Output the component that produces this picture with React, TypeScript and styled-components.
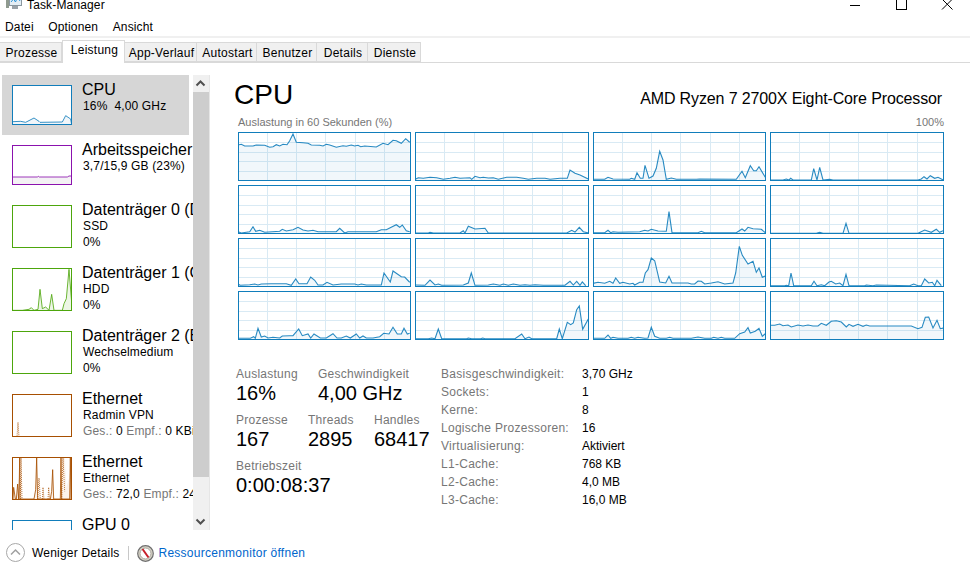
import React from 'react'
import styled, { createGlobalStyle } from 'styled-components'

const CPU_BLUE = '#117dbb'

const GlobalStyle = createGlobalStyle`
  html, body {
    margin: 0;
    padding: 0;
    background: #fff;
    overflow: hidden;
  }
  body {
    font-family: "Liberation Sans", Arial, sans-serif;
    color: #000;
  }
`

const Page = styled.div`
  width: 970px;
  height: 575px;
  display: flex;
  flex-direction: column;
  overflow: hidden;
`

const TitleBar = styled.div`
  height: 18px;
  box-sizing: border-box;
  padding: 0 16px 8px 6px;
  display: flex;
  align-items: flex-end;
  overflow: hidden;
  font-size: 12px;
`

const TitleText = styled.span`
  margin-left: 5px;
  line-height: 14px;
  margin-bottom: -2px;
  letter-spacing: 0.15px;
  flex: 1;
`

const MenuBar = styled.div`
  height: 18px;
  display: flex;
  align-items: center;
  padding-left: 5px;
  gap: 14.5px;
  font-size: 12px;
  letter-spacing: 0.15px;
  border-bottom: 2px solid #f0f0f0;
`

const TabStrip = styled.div`
  height: 23px;
  box-sizing: border-box;
  margin-top: 2px;
  display: flex;
  align-items: flex-end;
  border-bottom: 1px solid #d9d9d9;
`

const Tab = styled.div<{ $width: number; $active?: boolean }>`
  width: ${p => p.$width}px;
  box-sizing: border-box;
  height: ${p => (p.$active ? 23 : 20)}px;
  margin-bottom: ${p => (p.$active ? -1 : 0)}px;
  padding: ${p => (p.$active ? 2 : 3)}px 0 0 2px;
  text-align: center;
  font-size: 12px;
  line-height: 14px;
  letter-spacing: 0.25px;
  background: ${p => (p.$active ? '#fff' : '#f0f0f0')};
  border: 1px solid #d9d9d9;
  border-bottom: ${p => (p.$active ? 'none' : '1px solid #d9d9d9')};
  border-left: ${p => (p.$active ? '1px solid #d9d9d9' : 'none')};
`

const Body = styled.div`
  height: 472px;
  display: flex;
`

const List = styled.div`
  width: 191px;
  height: 455px;
  margin: 12px 0 0 2px;
  overflow: hidden;
  flex: none;
`

const Item = styled.div<{ $selected?: boolean }>`
  width: 187px;
  box-sizing: border-box;
  padding: 5px 10px 10px;
  display: flex;
  align-items: flex-start;
  gap: 10px;
  background: ${p => (p.$selected ? '#d6d6d6' : 'transparent')};
`

const ItemText = styled.div`
  height: 40px;
  padding-left: 1px;
  white-space: nowrap;
  font-size: 12px;
  line-height: 16px;
  letter-spacing: 0.15px;
`

const ItemTitle = styled.div`
  margin: 1px 0 -1px -1px;
  font-size: 16px;
  line-height: 18px;
  letter-spacing: 0;
`

const Muted = styled.span`
  color: #767676;
`

const Thumb = styled.svg<{ $color: string }>`
  display: block;
  flex: none;
  width: 60px;
  margin-top: 5px;
  box-sizing: border-box;
  background: #fff;
  border: 1px solid ${p => p.$color};
`

const ScrollBar = styled.div`
  width: 16px;
  height: 455px;
  margin-top: 12px;
  flex: none;
  display: flex;
  flex-direction: column;
  background: #f0f0f0;
  border-right: 1px solid #e6e6e6;
`

const ScrollArrow = styled.svg`
  display: block;
  width: 15px;
  height: 17px;
  flex: none;
`

const ScrollThumb = styled.div`
  height: 385px;
  background: #cdcdcd;
  margin-bottom: auto;
`

const Main = styled.div`
  flex: 1;
  padding: 15px 26px 0 24px;
`

const Header = styled.div`
  display: flex;
  justify-content: space-between;
  align-items: baseline;
  height: 37px;
`

const Heading = styled.div`
  font-size: 28px;
  line-height: 34px;
`

const ProcessorName = styled.div`
  font-size: 16px;
  letter-spacing: -0.13px;
  margin-right: 2px;
`

const Caption = styled.div`
  display: flex;
  justify-content: space-between;
  margin-left: 4px;
  font-size: 11px;
  line-height: 14px;
  height: 17px;
  color: #767676;
`

const GraphGrid = styled.div`
  display: grid;
  grid-template-columns: 173px 174px 173px 174px;
  grid-auto-rows: 49px;
  gap: 4px;
  margin-left: 4px;
`

const GraphFrame = styled.svg`
  display: block;
  width: 100%;
  height: 100%;
  box-sizing: border-box;
  border: 1px solid ${CPU_BLUE};
`

const Stats = styled.div`
  display: flex;
  margin: 26px 0 0 2px;
`

const StatColumn = styled.div`
  width: 205px;
  display: flex;
  flex-direction: column;
  gap: 6px;
`

const StatRow = styled.div`
  display: flex;
`

const Stat = styled.div<{ $width?: number }>`
  width: ${p => (p.$width ? `${p.$width}px` : 'auto')};
`

const StatLabel = styled.div`
  font-size: 12px;
  line-height: 16px;
  letter-spacing: 0.25px;
  color: #767676;
`

const StatValue = styled.div`
  margin: -1px 0 1px;
  font-size: 20px;
  line-height: 24px;
  white-space: nowrap;
`

const SpecTable = styled.div`
  display: grid;
  grid-template-columns: 141px auto;
  grid-auto-rows: 18px;
  margin-top: -1px;
  font-size: 12px;
  line-height: 18px;
`

const SpecLabel = styled.div`
  color: #767676;
  letter-spacing: 0.28px;
`

const Footer = styled.div`
  height: 36px;
  display: flex;
  align-items: center;
  padding-left: 6px;
  font-size: 12px;
  letter-spacing: 0.2px;
`

const DetailsButton = styled.svg`
  flex: none;
  width: 20px;
  height: 20px;
  margin-right: 6px;
`

const FooterDivider = styled.div`
  width: 1px;
  height: 14px;
  background: #c8c8c8;
  margin: 0 8px 0 9px;
`

const MonitorIcon = styled.svg`
  flex: none;
  width: 17px;
  height: 17px;
  margin-right: 4px;
`

const FooterLink = styled.span`
  color: #0066cc;
  letter-spacing: 0.26px;
`

// graph traces were read off the reference at 3x zoom, ox/oy is the frame corner in that crop
type Trace = { ox: number; oy: number; pts: string }

const traces: Trace[] = [
  { ox: 25, oy: 66, pts: '25,105 35,103 45,108 70,108 80,105 105,106 120,112 130,110 140,104 150,108 160,103 172,104 180,92 190,72 200,97 220,98 235,100 245,105 270,106 280,108 290,103 300,105 320,112 340,107 350,109 365,105 375,108 385,106 393,110 405,108 440,111 460,100 475,104 490,91 500,92 515,100 528,86 540,97' },
  { ox: 555, oy: 66, pts: '555,208 565,203 580,205 600,202 620,203 640,208 660,205 675,202 690,205 720,203 725,208 735,199 750,203 760,202 775,204 790,203 805,208 830,202 860,202 880,205 895,208 920,205 945,205 960,208 990,205 1012,205 1020,180 1035,190 1050,195 1075,207' },
  { ox: 10, oy: 66, pts: '10,208 45,208 55,202 70,207 120,208 125,205 135,208 142,188 152,205 160,205 166,166 178,205 190,198 200,175 210,124 220,150 230,208 245,204 260,208 320,208 330,207 440,208 457,184 467,203 482,167 492,182 500,182 508,170 527,202' },
  { ox: 541, oy: 66, pts: '541,210 580,210 590,207 598,210 603,205 610,210 665,210 672,176 682,210 690,172 700,210 720,208 730,210 985,210 995,207 1003,200 1012,207 1022,197 1035,205 1045,202 1061,210' },
  { ox: 25, oy: 225, pts: '25,365 35,369 60,365 70,350 78,364 90,361 105,367 150,364 158,358 170,363 190,359 205,352 220,360 235,363 250,361 265,365 320,365 330,355 345,369 355,365 440,365 455,359 470,359 500,344 510,352 518,345 530,362 540,365' },
  { ox: 555, oy: 225, pts: '555,369 595,369 600,367 610,369 690,369 700,362 705,369 715,349 735,357 765,355 775,369 1010,369 1025,361 1035,366 1048,352 1060,365 1075,369' },
  { ox: 10, oy: 225, pts: '10,368 45,368 55,361 63,368 70,365 85,367 150,365 165,361 175,363 185,358 205,363 230,364 238,305 247,368 325,368 335,364 345,368 440,368 457,357 465,363 475,352 490,356 515,358 527,368' },
  { ox: 541, oy: 225, pts: '541,370 680,370 690,367 700,370 760,370 769,340 778,370 985,370 1005,360 1025,367 1040,358 1050,367 1060,362' },
  { ox: 25, oy: 10, pts: '25,148 32,152 60,150 75,148 85,151 95,148 125,147 170,147 185,152 198,133 208,147 232,147 243,127 255,137 265,151 280,151 292,143 310,151 335,148 375,148 385,151 395,148 410,151 455,151 463,115 482,142 490,109 515,126 525,127 540,143' },
  { ox: 555, oy: 10, pts: '555,151 585,152 600,136 615,151 625,148 635,152 700,151 715,145 724,115 735,152 775,151 790,148 810,152 820,148 835,152 850,148 870,152 885,150 900,152 915,150 940,152 990,152 1005,152 1020,140 1030,151 1040,140 1050,152 1057,142 1067,153' },
  { ox: 10, oy: 10, pts: '10,146 25,143 45,146 60,140 70,146 78,130 90,146 100,143 120,148 130,146 135,151 150,143 160,143 167,115 175,105 185,70 195,78 210,142 228,145 238,125 247,145 295,145 305,148 315,148 325,139 335,140 345,148 365,145 385,141 405,148 430,145 438,115 449,35 458,62 475,88 490,80 500,113 508,100 518,128 527,124' },
  { ox: 541, oy: 10, pts: '541,153 585,153 590,152 597,153 604,115 612,153 665,153 673,140 682,153 695,150 705,153 718,142 725,140 738,148 750,145 760,153 769,119 778,153 825,153 830,151 850,153 860,151 960,153 972,148 985,153 995,153 1005,133 1017,145 1028,143 1035,153 1042,137 1055,153' },
  { ox: 25, oy: 169, pts: '25,311 62,311 72,306 77,311 85,281 95,307 105,304 115,310 130,308 150,310 158,304 180,303 190,303 207,283 218,303 235,298 243,310 253,298 272,310 290,310 310,297 322,310 335,310 350,304 362,310 380,298 390,310 400,304 410,310 430,310 450,306 462,296 478,298 490,278 503,298 515,298 523,281 533,298 540,296' },
  { ox: 555, oy: 169, pts: '555,312 595,312 605,310 615,312 625,283 635,312 710,312 715,310 725,312 752,312 758,310 765,312 855,312 875,298 885,312 897,307 905,312 980,312 988,283 997,312 1012,263 1022,270 1030,265 1040,225 1048,214 1058,284 1075,253' },
  { ox: 10, oy: 169, pts: '10,311 45,311 55,301 63,311 70,308 85,311 115,311 125,308 135,311 145,308 165,311 175,310 185,278 195,305 210,311 230,311 240,308 250,311 305,311 325,307 345,311 365,311 372,308 385,311 395,308 405,311 435,311 450,297 465,292 475,279 482,295 497,290 508,281 518,305 527,297' },
  { ox: 541, oy: 169, pts: '541,272 555,272 570,268 580,273 595,271 605,277 625,271 640,274 655,271 670,274 685,274 695,266 710,272 725,260 740,258 755,262 770,277 778,269 790,275 805,269 820,275 830,271 840,274 965,274 985,282 997,278 1007,248 1017,247 1030,280 1042,257 1052,282 1061,280' },
]

const toPixels = ({ ox, oy, pts }: Trace) =>
  pts
    .split(' ')
    .map(p => {
      const [x, y] = p.split(',').map(Number)
      return `${((x - ox) / 3 - 1).toFixed(1)},${((y - oy) / 3 - 1).toFixed(1)}`
    })
    .join(' ')

const COLUMNS = {
  narrow: [28.5, 57.5, 86.5, 116.5, 145.5],
  wide: [28.5, 58.5, 87.5, 116.5, 146.5],
}
const ROWS = [9.5, 19.5, 28.5, 38.5]

const CoreGraph = ({ trace, wide }: { trace: Trace; wide: boolean }) => {
  const w = wide ? 172 : 171
  const line = toPixels(trace)
  return (
    <GraphFrame viewBox={`0 0 ${w} 47`}>
      {(wide ? COLUMNS.wide : COLUMNS.narrow).map(x => (
        <line key={x} x1={x} x2={x} y1="0" y2="47" stroke="#d9eaf4" />
      ))}
      {ROWS.map(y => (
        <line key={y} x1="0" x2={w} y1={y} y2={y} stroke="#d9eaf4" />
      ))}
      <polygon points={`0,47 ${line} ${w},47`} fill={CPU_BLUE} fillOpacity="0.06" />
      <polyline points={line} fill="none" stroke={CPU_BLUE} strokeWidth="1.1" strokeOpacity="0.9" />
    </GraphFrame>
  )
}

const SideGraph = ({
  color,
  fill,
  height,
  pts,
  dotted,
  wash,
}: {
  color: string
  fill: string
  height: number
  pts?: string
  dotted?: string[]
  wash?: string
}) => (
  <Thumb $color={color} viewBox={`0 0 174 ${height * 3 - 6}`} style={{ height }}>
    {wash && <polygon points={wash} fill={fill} />}
    {pts && <polygon points={`0,${height * 3} ${pts} 174,${height * 3}`} fill={fill} />}
    {dotted?.map(d => (
      <polyline key={d} points={d} fill={fill} stroke={color} strokeWidth="3" strokeDasharray="3 3" strokeOpacity="0.75" />
    ))}
    {pts && <polyline points={pts} fill="none" stroke={color} strokeWidth="2.5" />}
  </Thumb>
)

const tabs: [string, number, boolean?][] = [
  ['Prozesse', 62],
  ['Leistung', 63, true],
  ['App-Verlauf', 72],
  ['Autostart', 60],
  ['Benutzer', 60],
  ['Details', 51],
  ['Dienste', 53],
]

const specs = [
  ['Basisgeschwindigkeit:', '3,70 GHz'],
  ['Sockets:', '1'],
  ['Kerne:', '8'],
  ['Logische Prozessoren:', '16'],
  ['Virtualisierung:', 'Aktiviert'],
  ['L1-Cache:', '768 KB'],
  ['L2-Cache:', '4,0 MB'],
  ['L3-Cache:', '16,0 MB'],
]

const App = () => (
  <Page>
    <GlobalStyle />
    <TitleBar>
      <svg width="16" height="16" viewBox="0 0 16 16">
        <rect x="3.500" y="1.500" width="12" height="10" fill="#e4eef5" stroke="#8a97a0" />
        <polyline points="5,8 7.500,5 9.500,8 11.500,3 14,7" fill="none" stroke="#2f95d8" />
        <rect x="0" y="5" width="3" height="9" fill="#8f9a8f" />
        <rect x="6" y="12" width="6" height="3" fill="#9aa2a8" />
      </svg>
      <TitleText>Task-Manager</TitleText>
      <svg width="110" height="12" viewBox="0 0 110 12">
        <line x1="6" x2="16" y1="7.500" y2="7.500" stroke="#000" />
        <rect x="52.500" y="1.500" width="10" height="10" fill="none" stroke="#000" />
        <path d="M98 1l10.500 10.500M108.500 1L98 11.500" stroke="#000" fill="none" />
      </svg>
    </TitleBar>
    <MenuBar>
      <span>Datei</span>
      <span>Optionen</span>
      <span>Ansicht</span>
    </MenuBar>
    <TabStrip>
      {tabs.map(([label, width, active]) => (
        <Tab key={label} $width={width} $active={active}>
          {label}
        </Tab>
      ))}
    </TabStrip>
    <Body>
      <List>
        <Item $selected>
          <SideGraph color={CPU_BLUE} fill="#f1f6fa" height={40} pts="0,107 23,106 38,109 63,96 78,106 81,109 148,108 158,89 173,99 176,116" />
          <ItemText>
            <ItemTitle>CPU</ItemTitle>
            16%&nbsp; 4,00 GHz
          </ItemText>
        </Item>
        <Item>
          <SideGraph color="#8b12ae" fill="#f4f2f4" height={40} pts="0,93 73,93 76,91 79,93 163,93 168,90 178,90" />
          <ItemText>
            <ItemTitle>Arbeitsspeicher</ItemTitle>
            3,7/15,9 GB (23%)
          </ItemText>
        </Item>
        <Item>
          <SideGraph color="#4da60c" fill="#edf6e6" height={43} />
          <ItemText>
            <ItemTitle>Datenträger 0 (D:)</ItemTitle>
            <div>SSD</div>
            <div>0%</div>
          </ItemText>
        </Item>
        <Item>
          <SideGraph color="#4da60c" fill="#edf6e6" height={43} pts="0,124 28,124 48,121 55,116 63,124 75,121 81,61 88,119 98,114 108,124 116,76 123,124 148,124 153,104 160,89 168,1 176,100" />
          <ItemText>
            <ItemTitle>Datenträger 1 (C:)</ItemTitle>
            <div>HDD</div>
            <div>0%</div>
          </ItemText>
        </Item>
        <Item>
          <SideGraph color="#4da60c" fill="#edf6e6" height={43} />
          <ItemText>
            <ItemTitle>Datenträger 2 (E:)</ItemTitle>
            <div>Wechselmedium</div>
            <div>0%</div>
          </ItemText>
        </Item>
        <Item>
          <SideGraph color="#a74f01" fill="#fcf3eb" height={43} dotted={['12,124 15,82 18,124']} />
          <ItemText>
            <ItemTitle>Ethernet</ItemTitle>
            <div>Radmin VPN</div>
            <div>
              <Muted>Ges.:</Muted> 0 <Muted>Empf.:</Muted> 0 KBit/s
            </div>
          </ItemText>
        </Item>
        <Item>
          <SideGraph
            color="#a74f01"
            fill="#fcf3eb"
            height={43}
            wash="144,123 148,0 156,0 160,90 168,60 172,0 174,0 174,123"
            pts="0,123 2,88 7,123 10,123 14,78 17,123 19,60 20,0 21,123 63,123 68,95 71,0 74,123 112,123 116,100 119,35 122,123 142,123 144,0 146,123 170,123 172,0 174,123"
            dotted={['22,123 24,0 27,123', '74,123 78,60 82,123', '88,123 90,88 93,123', '105,123 107,88 110,123', '146,123 150,0 155,100']}
          />
          <ItemText>
            <ItemTitle>Ethernet</ItemTitle>
            <div>Ethernet</div>
            <div>
              <Muted>Ges.:</Muted> 72,0 <Muted>Empf.:</Muted> 24,0 KBit/s
            </div>
          </ItemText>
        </Item>
        <Item>
          <SideGraph color={CPU_BLUE} fill="#f1f6fa" height={43} />
          <ItemText>
            <ItemTitle>GPU 0</ItemTitle>
          </ItemText>
        </Item>
      </List>
      <ScrollBar>
        <ScrollArrow viewBox="0 0 15 17">
          <path d="M3.500 10.500l4-4 4 4" fill="none" stroke="#505050" strokeWidth="2" />
        </ScrollArrow>
        <ScrollThumb />
        <ScrollArrow viewBox="0 0 15 17">
          <path d="M3.500 6.500l4 4 4-4" fill="none" stroke="#505050" strokeWidth="2" />
        </ScrollArrow>
      </ScrollBar>
      <Main>
        <Header>
          <Heading>CPU</Heading>
          <ProcessorName>AMD Ryzen 7 2700X Eight-Core Processor</ProcessorName>
        </Header>
        <Caption>
          <span>Auslastung in 60 Sekunden (%)</span>
          <span>100%</span>
        </Caption>
        <GraphGrid>
          {traces.map((t, i) => (
            <CoreGraph key={i} trace={t} wide={i % 2 === 1} />
          ))}
        </GraphGrid>
        <Stats>
          <StatColumn>
            <StatRow>
              <Stat $width={82}>
                <StatLabel>Auslastung</StatLabel>
                <StatValue>16%</StatValue>
              </Stat>
              <Stat>
                <StatLabel>Geschwindigkeit</StatLabel>
                <StatValue>4,00 GHz</StatValue>
              </Stat>
            </StatRow>
            <StatRow>
              <Stat $width={72}>
                <StatLabel>Prozesse</StatLabel>
                <StatValue>167</StatValue>
              </Stat>
              <Stat $width={66}>
                <StatLabel>Threads</StatLabel>
                <StatValue>2895</StatValue>
              </Stat>
              <Stat>
                <StatLabel>Handles</StatLabel>
                <StatValue>68417</StatValue>
              </Stat>
            </StatRow>
            <Stat>
              <StatLabel>Betriebszeit</StatLabel>
              <StatValue>0:00:08:37</StatValue>
            </Stat>
          </StatColumn>
          <SpecTable>
            {specs.map(([label, value]) => (
              <React.Fragment key={label}>
                <SpecLabel>{label}</SpecLabel>
                <div>{value}</div>
              </React.Fragment>
            ))}
          </SpecTable>
        </Stats>
      </Main>
    </Body>
    <Footer>
      <DetailsButton viewBox="0 0 20 20">
        <circle cx="9.500" cy="9.500" r="9" fill="#fff" stroke="#a8a8a8" />
        <path d="M5 11.500l4.500-4.500 4.500 4.500" fill="none" stroke="#a0a0a0" strokeWidth="1.500" />
      </DetailsButton>
      <span>Weniger Details</span>
      <FooterDivider />
      <MonitorIcon viewBox="0 0 17 17">
        <circle cx="8.500" cy="8.500" r="7.800" fill="#d8d4c8" stroke="#6f6f6f" strokeWidth="1.200" />
        <circle cx="8.500" cy="8.500" r="5.500" fill="#fff" stroke="#a8a49a" />
        <path d="M5.500 4l6 8.500" stroke="#c8202a" strokeWidth="2" />
      </MonitorIcon>
      <FooterLink>Ressourcenmonitor öffnen</FooterLink>
    </Footer>
  </Page>
)

export default App
